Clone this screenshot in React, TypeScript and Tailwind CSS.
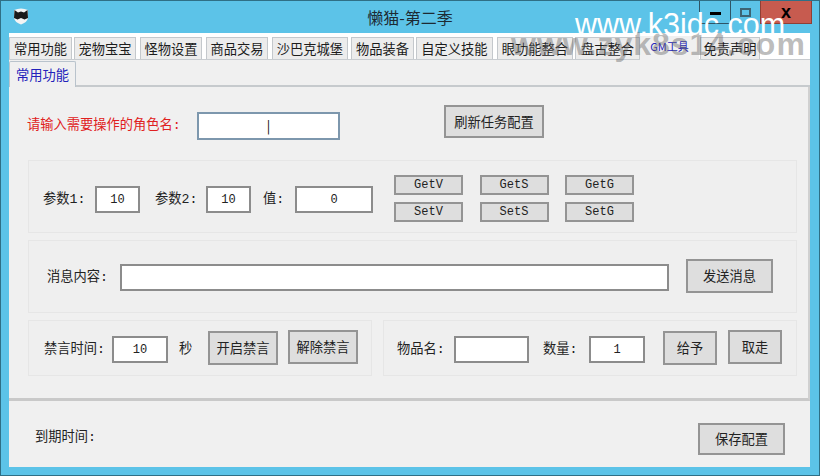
import React from "react";

const cjk = "font-['Noto_Sans_CJK_SC',sans-serif]";
const mono = "font-['Liberation_Mono','Noto_Sans_CJK_SC',monospace]";
const label = `shrink-0 ${mono} text-[13.25px] text-[#222]`;

function Tab({ label, w, active, gm }: { label: string; w: string; active?: boolean; gm?: boolean }) {
  return (
    <div
      className={`${w} flex items-center justify-center whitespace-nowrap leading-none ${
        active
          ? "h-[24px] -mb-px bg-[#f0f0f0] pb-[3px] text-[#2222bb]"
          : "h-[22px] border border-b-0 border-[#c4c8cc] bg-[#ececec] text-[#1c1c1c]"
      } ${gm ? "text-[11px]" : "text-[13.25px]"}`}
    >
      {label}
    </div>
  );
}

function Field({ w, h = "h-[27px]", value, border = "border-[#8c8c8c]" }: { w: string; h?: string; value?: string; border?: string }) {
  return (
    <div className={`${w} ${h} shrink-0 flex items-center justify-center border-2 ${border} bg-white ${mono} text-[12px] text-[#222]`}>
      {value}
    </div>
  );
}

function Btn({ w, h, label, small }: { w: string; h: string; label: string; small?: boolean }) {
  return (
    <div
      className={`${w} ${h} shrink-0 flex items-center justify-center border-2 border-[#949494] bg-[#dedede] text-[#222] ${
        small ? `${mono} text-[12px]` : "text-[13.25px]"
      }`}
    >
      {label}
    </div>
  );
}

function Group({ className, children }: { className: string; children: React.ReactNode }) {
  return <div className={`flex items-center border border-[#e6e6e6] bg-[#efefef] ${className}`}>{children}</div>;
}

export default function App() {
  return (
    <div className={`relative h-[476px] w-[820px] overflow-hidden border border-[#2f6f86] bg-[#5cc3e8] ${cjk}`}>
      {/* Title bar */}
      <div className="grid h-[32px] grid-cols-[1fr_auto_1fr] items-start">
        <div className="pl-[12px] pt-[6px]">
          <svg width="16" height="18" viewBox="0 0 16 18">
            <path d="M1 3 Q8 0 15 3 L15 11 Q14 15.5 8 17.5 Q2 15.5 1 11 Z" fill="#f4f4f4" />
            <path d="M1.5 3 L5 5.5 L8 4.5 L11 5.5 L14.5 3 L15 11 L11.5 12.5 L8 11 L4.5 12.5 L1 11 Z" fill="#1a1a1a" />
          </svg>
        </div>
        <div className="pt-[5px] text-[16px] leading-[22px] text-[#1d2a33]">懒猫-第二季</div>
        <div className="flex justify-end pr-[7px]">
          <div className="flex h-[23px] w-[32px] items-center justify-center border border-t-0 border-[#2f5566]">
            <div className="mt-[2px] h-[3px] w-[11px] bg-black" />
          </div>
          <div className="flex h-[23px] w-[29px] items-center justify-center">
            <div className="h-[9px] w-[11px] border-2 border-[#3d6473]" />
          </div>
          <div className="flex h-[23px] w-[52px] items-center justify-center border border-t-0 border-[#8f3f35] bg-[#c75b4f]">
            <span className="font-['Liberation_Sans',sans-serif] text-[18px] font-bold leading-none text-black">x</span>
          </div>
        </div>
      </div>

      {/* Client area */}
      <div className="ml-[8px] mr-[9px] h-[434px] bg-[#f0f0f0]">
        {/* Main tabs */}
        <div className="flex h-[27px] items-end border-b border-[#c8ccd0] bg-white">
          <Tab label="常用功能" w="w-[63px]" />
          <Tab label="宠物宝宝" w="ml-[2px] w-[62px]" />
          <Tab label="怪物设置" w="ml-[4px] w-[62px]" />
          <Tab label="商品交易" w="ml-[4px] w-[62px]" />
          <Tab label="沙巴克城堡" w="ml-[4px] w-[76px]" />
          <Tab label="物品装备" w="ml-[3px] w-[63px]" />
          <Tab label="自定义技能" w="ml-[2px] w-[77px]" />
          <Tab label="眼功能整合" w="ml-[4px] w-[76px]" />
          <Tab label="盘古整合" w="ml-[2px] w-[65px]" />
          <Tab label="GM工具" w="w-[59px]" active gm />
          <Tab label="免责声明" w="ml-px w-[60px]" />
        </div>

        {/* Sub tabs */}
        <div className="flex h-[27px] items-end border-b-2 border-[#c6cacd]">
          <div className="-mb-[2px] flex h-[26px] w-[67px] items-center justify-center rounded-t-[2px] border border-b-0 border-[#b9c3cc] bg-[#f0f0f0] text-[13.25px] text-[#2222bb]">
            常用功能
          </div>
        </div>

        {/* Page */}
        <div className="h-[314px] border-b-[3px] border-r-2 border-[#c9c9c9] border-r-[#d0d0d0] pl-[19px]">
          <div className="-ml-px flex h-[73px] items-center">
            <span className={`mt-[4px] w-[170px] shrink-0 ${mono} text-[13.25px] text-[#e02020]`}>请输入需要操作的角色名:</span>
            <div className="mt-[4px] flex h-[28px] w-[143px] shrink-0 items-center justify-center border-2 border-[#7d97ad] bg-white text-[13px] leading-none text-black">
              |
            </div>
            <div className="-mt-[4px] ml-[104px]">
              <Btn w="w-[100px]" h="h-[33px]" label="刷新任务配置" />
            </div>
          </div>

          <Group className="h-[73px] w-[769px] pt-[6px]">
            <span className={`ml-[14px] w-[52px] ${label}`}>参数1:</span>
            <Field w="w-[45px]" value="10" />
            <span className={`ml-[15px] w-[51px] ${label}`}>参数2:</span>
            <Field w="w-[45px]" value="10" />
            <span className={`ml-[12px] w-[32px] ${label}`}>值:</span>
            <Field w="w-[78px]" value="0" />
            <div className="-mt-[3px] ml-[21px] grid grid-cols-[69px_69px_69px] gap-x-[16.5px] gap-y-[7px]">
              {["GetV", "GetS", "GetG", "SetV", "SetS", "SetG"].map((t) => (
                <Btn key={t} w="w-[69px]" h="h-[20px]" label={t} small />
              ))}
            </div>
          </Group>

          <Group className="mt-[7px] h-[73px] w-[769px] pt-[2px]">
            <span className={`ml-[18px] w-[73px] ${label}`}>消息内容:</span>
            <Field w="w-[549px]" />
            <div className="-mt-[4px] ml-[17px]">
              <Btn w="w-[87px]" h="h-[34px]" label="发送消息" />
            </div>
          </Group>

          <div className="mt-[7px] flex gap-[11px]">
            <Group className="h-[56px] w-[344px] pt-[3px]">
              <span className={`ml-[15px] w-[68px] ${label}`}>禁言时间:</span>
              <Field w="w-[56px]" value="10" />
              <span className={`ml-[11px] w-[29px] ${label}`}>秒</span>
              <div className="-mt-[3px]">
                <Btn w="w-[70px]" h="h-[34px]" label="开启禁言" />
              </div>
              <div className="-mt-[5px] ml-[10px]">
                <Btn w="w-[70px]" h="h-[34px]" label="解除禁言" />
              </div>
            </Group>
            <Group className="h-[56px] w-[414px] pt-[3px]">
              <span className={`ml-[13px] w-[57px] ${label}`}>物品名:</span>
              <Field w="w-[75px]" />
              <span className={`ml-[14px] w-[46px] ${label}`}>数量:</span>
              <Field w="w-[56px]" value="1" />
              <div className="-mt-[3px] ml-[18px]">
                <Btn w="w-[54px]" h="h-[34px]" label="给予" />
              </div>
              <div className="-mt-[5px] ml-[11px]">
                <Btn w="w-[54px]" h="h-[34px]" label="取走" />
              </div>
            </Group>
          </div>
        </div>

        {/* Footer */}
        <div className="flex h-[66px] items-center justify-between pl-[26px] pr-[25px]">
          <span className={`mt-[8px] ${label}`}>到期时间:</span>
          <div className="mt-[10px]">
            <Btn w="w-[87px]" h="h-[32px]" label="保存配置" />
          </div>
        </div>
      </div>

      {/* Watermarks over the window */}
      <div className="pointer-events-none absolute left-[510px] top-[27px] whitespace-nowrap font-['Liberation_Sans',sans-serif] text-[32px] font-bold leading-none tracking-[1px] text-[#6a6a6a]/45">
        www.zyk8s14.com
      </div>
      <div className="pointer-events-none absolute left-[574px] top-[8px] whitespace-nowrap font-['Liberation_Sans',sans-serif] text-[30.5px] leading-none text-white">
        www.k3idc.com
      </div>
    </div>
  );
}
